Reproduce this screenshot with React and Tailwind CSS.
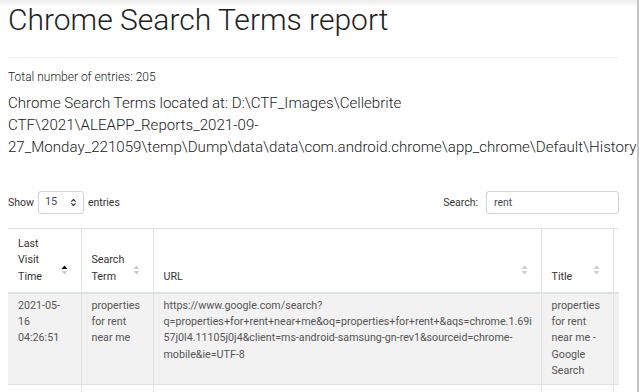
import { ChevronsUpDown } from "lucide-react";

const font = { fontFamily: "Roboto, 'Liberation Sans', sans-serif" };

function SortIcon({ active }) {
  return (
    <svg width="7" height="10" viewBox="0 0 7 10" className="absolute right-[13px] bottom-[17px]">
      <path d="M0.5 4 L3.5 0.5 L6.5 4 Z" fill={active ? "#111" : "#ccc"} />
      <path d="M0.5 6 L3.5 9.5 L6.5 6 Z" fill="#ccc" />
    </svg>
  );
}

const headers = [
  { lines: ["Last", "Visit", "Time"], w: "w-[73px]", active: true },
  { lines: ["Search", "Term"], w: "w-[72px]" },
  { lines: ["URL"], w: "w-[388px]" },
  { lines: ["Title"], w: "w-[72px]" },
  { lines: [""], w: "w-[60px]" },
];

const row = [
  ["2021-05-", "16", "04:26:51"],
  ["properties", "for rent", "near me"],
  [
    "https://www.google.com/search?",
    "q=properties+for+rent+near+me&oq=properties+for+rent+&aqs=chrome.1.69i",
    "57j0l4.11105j0j4&client=ms-android-samsung-gn-rev1&sourceid=chrome-",
    "mobile&ie=UTF-8",
  ],
  ["properties", "for rent", "near me -", "Google", "Search"],
  [""],
];

export default function App() {
  return (
    <div className="flex h-[392px] overflow-hidden bg-white" style={font}>
      <div className="w-[637px] shrink-0 bg-[linear-gradient(to_bottom,#ececec,#ffffff_7px)] pl-2 pr-[18px]">
        <h1 className="text-[30px] font-light leading-[38px] text-[#222] pt-[1px]">Chrome Search Terms report</h1>
        <div className="mt-[18px] h-px bg-[#eeeeee]" />
        <p className="mt-[11px] text-[12px] font-light leading-[16px] text-[#222]">Total number of entries: 205</p>
        <p className="mt-[7px] text-[15.1px] font-light leading-[22px] text-[#222] whitespace-nowrap">
          Chrome Search Terms located at: D:\CTF_Images\Cellebrite
          <br />
          CTF\2021\ALEAPP_Reports_2021-09-
          <br />
          27_Monday_221059\temp\Dump\data\data\com.android.chrome\app_chrome\Default\History
        </p>

        <div className="mt-[33px] flex items-center justify-between text-[10.5px] text-[#333]">
          <div className="flex items-center gap-[4px]">
            <span>Show</span>
            <div className="flex h-[23px] w-[46px] items-center justify-between rounded-[3px] border border-[#ced4da] pl-[6px] pr-[5px] text-[#495057] text-[11px]">
              <span>15</span>
              <ChevronsUpDown size={9} strokeWidth={3} className="text-[#333]" />
            </div>
            <span>entries</span>
          </div>
          <div className="flex items-center gap-[8px]">
            <span>Search:</span>
            <div className="flex h-[23px] w-[133px] items-center rounded-[3px] border border-[#ced4da] pl-[7px] text-[#495057]">
              rent
            </div>
          </div>
        </div>

        <div className="mt-[14px] w-[611px] overflow-hidden">
          <table className="table-fixed border-collapse text-[10.7px] leading-[16.3px]" style={{ width: 665 }}>
            <thead>
              <tr>
                {headers.map((h, i) => (
                  <th
                    key={i}
                    className={`${h.w} relative border border-[#dee2e6] border-b-2 px-[10px] pt-[7px] pb-[7px] text-left align-bottom font-normal text-[#333] first:border-l-0`}
                  >
                    {h.lines.map((l, j) => (
                      <div key={j}>{l || "\u00a0"}</div>
                    ))}
                    {i < 4 && <SortIcon active={h.active} />}
                  </th>
                ))}
              </tr>
            </thead>
            <tbody>
              <tr className="bg-[#f2f2f2]">
                {row.map((c, i) => (
                  <td key={i} className="border border-[#dee2e6] px-[10px] pt-[4px] pb-[5px] align-top text-[#555] whitespace-nowrap first:border-l-0">
                    {c.map((l, j) => (
                      <div key={j}>{l || "\u00a0"}</div>
                    ))}
                  </td>
                ))}
              </tr>
              <tr>
                {row.map((_, i) => (
                  <td key={i} className="h-[40px] border border-[#dee2e6] first:border-l-0" />
                ))}
              </tr>
            </tbody>
          </table>
        </div>
      </div>
      <div className="w-[2px] shrink-0 bg-[#c2c2c2]" />
    </div>
  );
}
